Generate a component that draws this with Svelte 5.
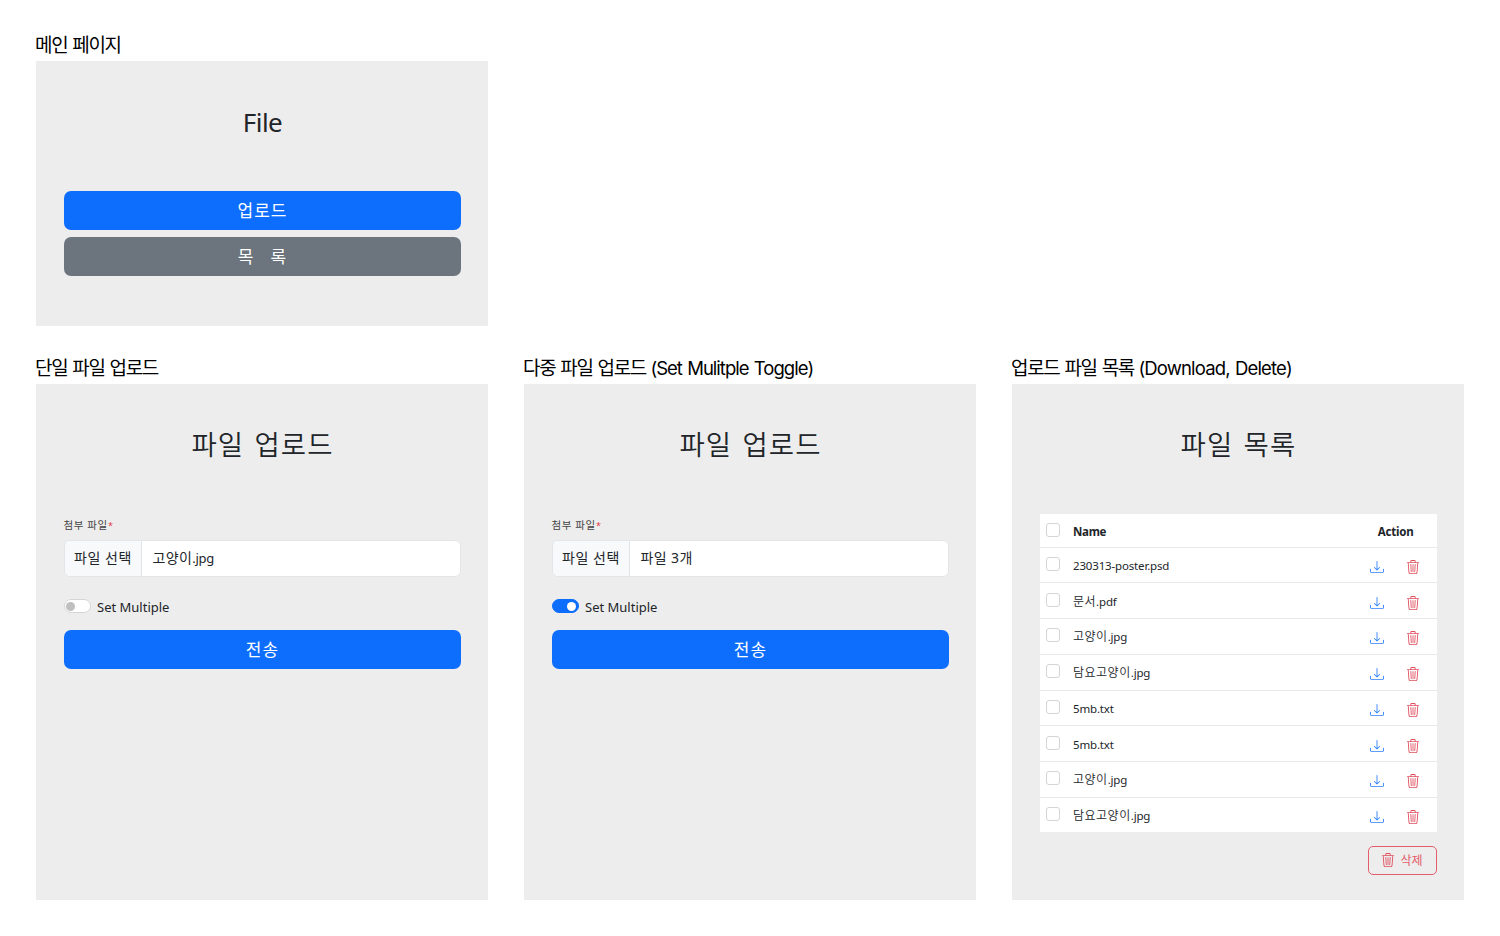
<script>
  const files = [
    ['', '230313-poster.psd'], ['문서', '.pdf'], ['고양이', '.jpg'], ['담요고양이', '.jpg'],
    ['', '5mb.txt'], ['', '5mb.txt'], ['고양이', '.jpg'], ['담요고양이', '.jpg']
  ];
  const forms = [
    { title: '단일 파일 업로드', extra: '', value: '고양이', ext: '.jpg', on: false },
    { title: '다중 파일 업로드', extra: '(Set Mulitple Toggle)', value: '파일 3개', ext: '', on: true }
  ];
</script>

{#snippet trash()}
  <svg class="trash" viewBox="0 0 16 16" fill="currentColor"><path d="M6.5 1h3a.5.5 0 0 1 .5.5v1H6v-1a.5.5 0 0 1 .5-.5ZM11 2.5v-1A1.5 1.5 0 0 0 9.5 0h-3A1.5 1.5 0 0 0 5 1.5v1H1.5a.5.5 0 0 0 0 1h.538l.853 10.66A2 2 0 0 0 4.885 16h6.23a2 2 0 0 0 1.994-1.84l.853-10.66h.538a.5.5 0 0 0 0-1H11Zm1.958 1-.846 10.58a1 1 0 0 1-.997.92H4.885a1 1 0 0 1-.997-.92L3.042 3.5h9.916Zm-7.487 1a.5.5 0 0 1 .528.47l.5 8.5a.5.5 0 0 1-.998.06L5 5.03a.5.5 0 0 1 .47-.53Zm5.058 0a.5.5 0 0 1 .47.53l-.5 8.5a.5.5 0 1 1-.998-.06l.5-8.5a.5.5 0 0 1 .528-.47ZM8 4.5a.5.5 0 0 1 .5.5v8.5a.5.5 0 0 1-1 0V5a.5.5 0 0 1 .5-.5Z" /></svg>
{/snippet}

{#snippet download()}
  <svg class="download" viewBox="0 0 16 16" fill="currentColor"><path d="M.5 9.9a.5.5 0 0 1 .5.5v2.5a1 1 0 0 0 1 1h12a1 1 0 0 0 1-1v-2.5a.5.5 0 0 1 1 0v2.5a2 2 0 0 1-2 2H2a2 2 0 0 1-2-2v-2.5a.5.5 0 0 1 .5-.5z" /><path d="M7.646 11.854a.5.5 0 0 0 .708 0l3-3a.5.5 0 0 0-.708-.708L8.5 10.293V1.5a.5.5 0 0 0-1 0v8.793L5.354 8.146a.5.5 0 1 0-.708.708l3 3z" /></svg>
{/snippet}

<main>
  <section class="top">
    <h2>메인 페이지</h2>
    <div class="panel small">
      <h1 class="latin">File</h1>
      <button class="big primary">업로드</button>
      <button class="big secondary">목<i></i>록</button>
    </div>
  </section>

  <div class="columns">
    {#each forms as f}
      <section>
        <h2>{f.title}{#if f.extra}<span class="en">{f.extra}</span>{/if}</h2>
        <div class="panel tall">
          <h1>파일 업로드</h1>
          <div class="label">첨부 파일<b>*</b></div>
          <div class="file"><span class="pick">파일 선택</span><span class="value">{f.value}<span class="ext">{f.ext}</span></span></div>
          <div class="switch-row"><span class="switch" class:on={f.on}></span><span class="switch-label">Set Multiple</span></div>
          <button class="big primary">전송</button>
        </div>
      </section>
    {/each}
    <section>
      <h2>업로드 파일 목록<span class="en wide">(Download, Delete)</span></h2>
      <div class="panel tall">
        <h1>파일 목록</h1>
        <div class="table">
          <div class="row head"><span class="check"></span><span class="name">Name</span><span class="action">Action</span></div>
          {#each files as [ko, latin]}
            <div class="row"><span class="check"></span><span class="name"><span class="ko">{ko}</span>{latin}</span>{@render download()}{@render trash()}</div>
          {/each}
        </div>
        <button class="delete">{@render trash()}<span>삭제</span></button>
      </div>
    </section>
  </div>
</main>

<style>
  :global(body) { margin: 0; background: #fff; }
  main {
    box-sizing: border-box; width: 1500px; height: 936px; padding: 28px 36px 0; overflow: hidden;
    font-family: "Noto Sans", "Noto Sans CJK KR", sans-serif; color: #212529;
  }
  .top { width: 452px; }
  h2 {
    margin: 0 0 0 -1px; height: 33px; line-height: 35px; font-family: Inter, "Noto Sans CJK KR", sans-serif;
    font-size: 19px; font-weight: 400; letter-spacing: -1.35px; word-spacing: 1px; color: #000; white-space: nowrap;
  }
  h2 .en { margin-left: 4.5px; font-size: 18.5px; font-weight: 400; letter-spacing: -0.98px; }
  h2 .wide { letter-spacing: -0.85px; }
  .panel { box-sizing: border-box; background: #ededed; padding: 0 27.5px; display: flex; flex-direction: column; }
  .small { height: 265px; }
  .tall { height: 516px; }
  .columns { display: grid; grid-template-columns: repeat(3, 452px); gap: 36px; margin-top: 25px; }
  h1 {
    margin: 0; height: 129.6px; line-height: 122px; text-align: center; font-size: 27.5px; font-weight: 350;
    letter-spacing: 1.1px; word-spacing: 2px; text-indent: 1px; white-space: nowrap; flex: none;
  }
  h1.latin { font-size: 26px; line-height: 122px; letter-spacing: -0.5px; font-weight: 400; }
  button { font-family: inherit; padding: 0; box-sizing: border-box; }
  .big {
    height: 39px; border: 0; border-radius: 7px; color: #fff; font-size: 17px; letter-spacing: 1px; line-height: 37px;
    flex: none; display: flex; justify-content: center; align-items: center; font-weight: 400; padding-left: 1px;
  }
  .primary { background: #0d6efd; }
  .secondary { background: #6c757d; margin-top: 7px; }
  .secondary i { width: 16px; }
  .label { height: 26px; line-height: 23px; font-size: 10.5px; letter-spacing: 0.6px; color: #444; }
  .label b { color: #e04050; font-weight: 400; font-size: 9px; letter-spacing: 0; }
  .file {
    height: 37px; box-sizing: border-box; border: 1px solid #e3e6e9; border-radius: 6px; background: #fff; display: flex;
    overflow: hidden; font-size: 14px; line-height: 34px; letter-spacing: 0.55px; white-space: nowrap;
  }
  .pick { width: 77px; box-sizing: border-box; padding-left: 9.5px; background: #f8f9fa; border-right: 1px solid #e3e6e9; }
  .value { padding-left: 11px; letter-spacing: 0.4px; }
  .ext { font-size: 13px; letter-spacing: -0.3px; }
  .switch-row { height: 53px; display: flex; align-items: center; padding-top: 6px; box-sizing: border-box; }
  .switch { width: 27px; height: 14px; border-radius: 7px; box-sizing: border-box; border: 1px solid #d5d5d5; background: #fff; display: flex; align-items: center; }
  .switch::before { content: ''; width: 9px; height: 9px; border-radius: 50%; background: #bfbfbf; margin-left: 1px; }
  .switch.on { background: #0d6efd; border-color: #0d6efd; }
  .switch.on::before { background: #fff; margin-left: 14.5px; }
  .switch-label { margin-left: 6.5px; font-size: 13px; line-height: 20px; padding-top: 2px; }
  .table { background: #fff; height: 318.4px; flex: none; }
  .row { display: flex; align-items: center; height: 35.75px; box-sizing: border-box; border-bottom: 1px solid #e9e9e9; padding-left: 6px; font-size: 11.5px; }
  .row:last-child { border-bottom: 0; height: 34.2px; }
  .head { height: 34px; font-weight: 700; }
  .check { width: 14px; height: 14px; box-sizing: border-box; border: 1px solid #d3d5d7; border-radius: 3px; margin-right: 13.5px; flex: none; position: relative; top: -1px; }
  .head .check { top: 0; }
  .name { flex: 1; line-height: 20px; padding-top: 2px; white-space: nowrap; letter-spacing: -0.16px; }
  .head .name { padding-top: 3px; letter-spacing: -0.3px; }
  .ko { font-size: 12px; letter-spacing: 0.5px; font-weight: 350; }
  .action { margin-right: 23px; padding-top: 3px; letter-spacing: -0.2px; }
  .row .download { width: 14px; height: 14px; color: #2b7ffd; margin-right: 22px; position: relative; top: 2px; }
  .trash { width: 14px; height: 14px; color: #e04f5d; }
  .row .trash { margin-right: 16.5px; position: relative; top: 2px; }
  .delete {
    align-self: flex-end; margin-top: 14px; width: 69px; height: 29px; border: 1px solid #e35d6a; border-radius: 5px; background: none;
    color: #e35d6a; font-size: 12px; display: flex; align-items: center; justify-content: center; gap: 5px;
  }
</style>
